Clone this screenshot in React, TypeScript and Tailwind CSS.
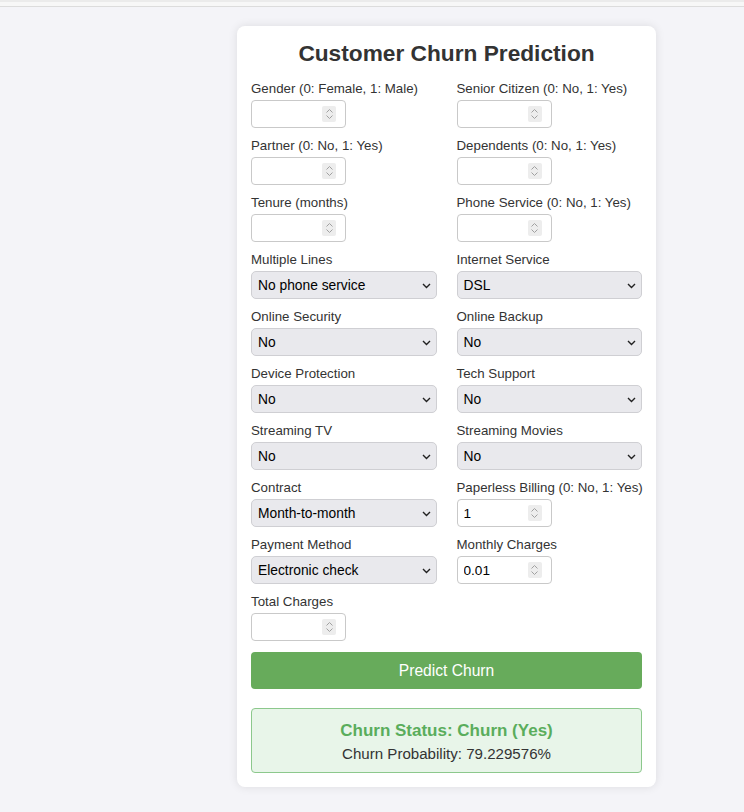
import React, { useState } from 'react';

type Field =
  | { kind: 'number'; label: string; value: string }
  | { kind: 'select'; label: string; value: string; options: string[] };

const fields: Field[] = [
  { kind: 'number', label: 'Gender (0: Female, 1: Male)', value: '' },
  { kind: 'number', label: 'Senior Citizen (0: No, 1: Yes)', value: '' },
  { kind: 'number', label: 'Partner (0: No, 1: Yes)', value: '' },
  { kind: 'number', label: 'Dependents (0: No, 1: Yes)', value: '' },
  { kind: 'number', label: 'Tenure (months)', value: '' },
  { kind: 'number', label: 'Phone Service (0: No, 1: Yes)', value: '' },
  { kind: 'select', label: 'Multiple Lines', value: 'No phone service', options: ['No phone service', 'No', 'Yes'] },
  { kind: 'select', label: 'Internet Service', value: 'DSL', options: ['DSL', 'Fiber optic', 'No'] },
  { kind: 'select', label: 'Online Security', value: 'No', options: ['No', 'Yes', 'No internet service'] },
  { kind: 'select', label: 'Online Backup', value: 'No', options: ['No', 'Yes', 'No internet service'] },
  { kind: 'select', label: 'Device Protection', value: 'No', options: ['No', 'Yes', 'No internet service'] },
  { kind: 'select', label: 'Tech Support', value: 'No', options: ['No', 'Yes', 'No internet service'] },
  { kind: 'select', label: 'Streaming TV', value: 'No', options: ['No', 'Yes', 'No internet service'] },
  { kind: 'select', label: 'Streaming Movies', value: 'No', options: ['No', 'Yes', 'No internet service'] },
  { kind: 'select', label: 'Contract', value: 'Month-to-month', options: ['Month-to-month', 'One year', 'Two year'] },
  { kind: 'number', label: 'Paperless Billing (0: No, 1: Yes)', value: '1' },
  {
    kind: 'select',
    label: 'Payment Method',
    value: 'Electronic check',
    options: ['Electronic check', 'Mailed check', 'Bank transfer (automatic)', 'Credit card (automatic)'],
  },
  { kind: 'number', label: 'Monthly Charges', value: '0.01' },
  { kind: 'number', label: 'Total Charges', value: '' },
];

const Spinner: React.FC = () => (
  <span className="pointer-events-none absolute right-[10px] top-[6px] flex h-[16px] w-[14px] flex-col items-center justify-center rounded-[2px] bg-[#ededed]">
    <svg width="7" height="4" viewBox="0 0 7 4" fill="none" stroke="#a0a0a0" strokeWidth="1">
      <path d="M0.5 3.5L3.5 0.5L6.5 3.5" />
    </svg>
    <svg width="7" height="4" viewBox="0 0 7 4" fill="none" stroke="#a0a0a0" strokeWidth="1" className="mt-[2px]">
      <path d="M0.5 0.5L3.5 3.5L6.5 0.5" />
    </svg>
  </span>
);

const NumberInput: React.FC<{ value: string }> = ({ value }) => {
  const [v, setV] = useState(value);
  return (
    <div className="relative w-[95px]">
      <input
        type="number"
        value={v}
        onChange={e => setV(e.target.value)}
        className="h-[28px] w-full rounded-[4px] border border-[#c9c9c9] bg-white pl-[6px] font-[family-name:Liberation_Sans,Arial,sans-serif] text-[13.6px] text-black outline-none [appearance:textfield] [&::-webkit-inner-spin-button]:appearance-none [&::-webkit-outer-spin-button]:appearance-none"
      />
      <Spinner />
    </div>
  );
};

const SelectInput: React.FC<{ value: string; options: string[] }> = ({ value, options }) => {
  const [v, setV] = useState(value);
  return (
    <div className="relative w-full">
      <select
        value={v}
        onChange={e => setV(e.target.value)}
        className="h-[28px] w-full appearance-none rounded-[5px] border border-[#cfcfd3] bg-[#e9e9ed] pt-[2px] pl-[6px] font-[family-name:Liberation_Sans,Arial,sans-serif] text-[13.8px] text-black outline-none"
      >
        {options.map(o => (
          <option key={o}>{o}</option>
        ))}
      </select>
      <svg
        width="9"
        height="6"
        viewBox="0 0 9 6"
        fill="none"
        stroke="#222"
        strokeWidth="1.4"
        className="pointer-events-none absolute right-[6px] top-[12px]"
      >
        <path d="M1 1L4.5 4.5L8 1" />
      </svg>
    </div>
  );
};

export default function App() {
  return (
    <div className="min-h-[812px] bg-[#f4f4f8] font-[family-name:Liberation_Sans,Arial,sans-serif] text-[#333]">
      <div className="h-[2px] bg-[#ebebeb]" />
      <div className="h-[4px] bg-[#f7f7f7]" />
      <div className="h-px bg-[#dcdcdc]" />
      <div className="pt-[19px] pb-[26px]">
        <div className="ml-[237px] w-[419px] rounded-[8px] bg-white px-[14px] pt-[13px] pb-[14px] shadow-[0_0_10px_rgba(0,0,0,0.1)]">
          <h1 className="mb-[14px] text-center text-[22.7px] font-bold leading-[28px] text-[#333]">
            Customer Churn Prediction
          </h1>
          <form onSubmit={e => e.preventDefault()}>
            <div className="grid grid-cols-2 gap-x-[20px] gap-y-[10px]">
              {fields.map(f => (
                <div key={f.label}>
                  <label className="mb-[3px] block text-[13.3px] leading-[16px] whitespace-nowrap text-[#333]">{f.label}</label>
                  {f.kind === 'number' ? (
                    <NumberInput value={f.value} />
                  ) : (
                    <SelectInput value={f.value} options={f.options} />
                  )}
                </div>
              ))}
            </div>
            <button
              type="submit"
              className="mt-[11px] h-[37px] w-full rounded-[4px] bg-[#67ab5b] font-[family-name:Liberation_Sans,Arial,sans-serif] text-[15.6px] text-white"
            >
              Predict Churn
            </button>
          </form>
          <div className="mt-[19px] rounded-[4px] border border-[#8cc88c] bg-[#e8f5e9] px-[10px] pt-[11px] pb-[8px] text-center">
            <p className="text-[17px] font-bold leading-[22px] text-[#5aad5c]">Churn Status: Churn (Yes)</p>
            <p className="mt-[2px] text-[15.1px] leading-[20px] text-[#333]">Churn Probability: 79.229576%</p>
          </div>
        </div>
      </div>
    </div>
  );
}
